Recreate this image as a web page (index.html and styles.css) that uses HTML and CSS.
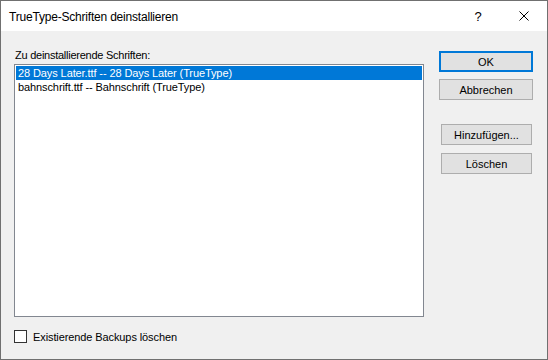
FILE: index.html
```html
<!DOCTYPE html>
<html>
  <head>
    <meta charset="utf-8" />
    <title>TrueType-Schriften deinstallieren</title>
    <link rel="stylesheet" href="styles.css">
  </head>

  <body>
    <div class="window">
      <div class="titlebar">
        <span class="title">TrueType-Schriften deinstallieren</span>
        <span class="cap-btn help">?</span>
        <span class="cap-btn close">
          <svg width="10" height="10" viewBox="0 0 10 10">
            <path d="M0.5 0.5 L9.5 9.5 M9.5 0.5 L0.5 9.5" stroke="#000" stroke-width="1" fill="none" />
          </svg>
        </span>
      </div>
      <div class="dialog">
        <div class="main">
          <div class="caption">Zu deinstallierende Schriften:</div>
          <div class="listbox">
            <div class="item selected">28 Days Later.ttf -- 28 Days Later (TrueType)</div>
            <div class="item">bahnschrift.ttf -- Bahnschrift (TrueType)</div>
          </div>
          <label class="check-row">
            <span class="check-box"></span>
            <span class="check-text">Existierende Backups löschen</span>
          </label>
        </div>
        <div class="actions">
          <button class="btn btn-default">OK</button>
          <button class="btn btn-cancel">Abbrechen</button>
          <button class="btn btn-small btn-add">Hinzufügen...</button>
          <button class="btn btn-small btn-del">Löschen</button>
        </div>
      </div>
    </div>
  </body>
</html>
```

FILE: styles.css
```css
html,
body {
  margin: 0;
  padding: 0;
  background: #f0f0f0;
}
.window {
  width: 548px;
  height: 360px;
  box-sizing: border-box;
  border: 1px solid #707070;
  background: #f0f0f0;
  display: flex;
  flex-direction: column;
  font-family: "Liberation Sans", Arial, sans-serif;
  font-size: 11px;
  color: #000;
}
.titlebar {
  height: 30px;
  background: #fff;
  display: flex;
  align-items: center;
  padding-left: 8px;
}
.title {
  flex: 1;
  font-size: 12px;
  letter-spacing: -0.2px;
  margin-top: 1px;
}
.cap-btn {
  width: 46px;
  height: 30px;
  display: flex;
  align-items: center;
  justify-content: center;
}
.help {
  font-size: 13px;
}
.dialog {
  flex: 1;
  display: flex;
  padding: 18px 0 0 13px;
}
.main {
  width: 410px;
}
.caption {
  line-height: 13px;
  padding-left: 1px;
  margin-bottom: 2px;
  letter-spacing: -0.25px;
}
.listbox {
  height: 253px;
  box-sizing: border-box;
  border: 1px solid #828790;
  background: #fff;
  padding: 1px;
}
.item {
  height: 14px;
  line-height: 14px;
  padding-left: 2px;
  white-space: nowrap;
  letter-spacing: -0.1px;
}
.selected {
  background: #0078d7;
  color: #fff;
}
.check-row {
  display: flex;
  align-items: flex-start;
  margin-top: 13px;
}
.check-box {
  width: 13px;
  height: 13px;
  box-sizing: border-box;
  border: 1px solid #333;
  background: #fff;
}
.check-text {
  margin-left: 6px;
  line-height: 13px;
  margin-top: 1px;
  letter-spacing: -0.1px;
}
.actions {
  margin-left: 15px;
  width: 94px;
  display: flex;
  flex-direction: column;
  align-items: flex-start;
}
.btn {
  width: 94px;
  height: 21px;
  box-sizing: border-box;
  background: #e1e1e1;
  border: 1px solid #adadad;
  font-family: "Liberation Sans", Arial, sans-serif;
  font-size: 11px;
  color: #000;
  padding: 0;
  margin: 0;
  outline: none;
}
.btn-default {
  margin-top: 2px;
  border: 2px solid #0078d7;
}
.btn-cancel {
  margin-top: 7px;
}
.btn-small {
  width: 91px;
  margin-left: 2px;
}
.btn-add {
  margin-top: 24px;
}
.btn-del {
  margin-top: 8px;
}
```
